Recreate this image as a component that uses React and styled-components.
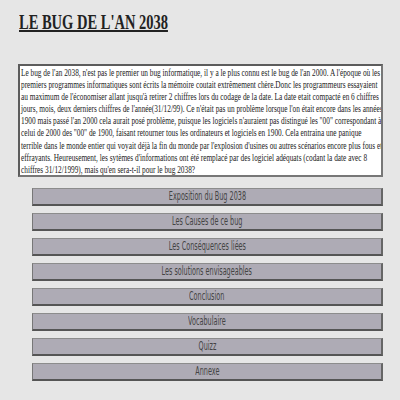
import React from 'react';
import styled, { createGlobalStyle } from 'styled-components';

const GlobalStyle = createGlobalStyle`
    html, body {
        margin: 0;
        padding: 0;
        background: #e6e6e6;
    }
`

const Page = styled.div`
    width: 400px;
    min-height: 400px;
    padding: 10px 17px 0 18px;
    box-sizing: border-box;
    display: flex;
    flex-direction: column;
`

const Title = styled.h1`
    margin: 0 0 0 1px;
    font-family: 'Liberation Serif', serif;
    font-size: 21px;
    font-weight: bold;
    color: #222;
    line-height: 24px;
    height: 24px;
    white-space: nowrap;
    text-decoration: underline;
    text-decoration-thickness: 2px;
    transform: scaleX(0.69);
    transform-origin: left top;
`

const TextBox = styled.div`
    margin-top: 30px;
    background: #fff;
    border: 2px solid #5c5c5c;
    border-right-color: #777;
    border-bottom-color: #777;
    padding: 0 0 0 1px;
    overflow: hidden;
`

const Text = styled.p`
    margin: 0;
    width: ${props => props.$w}px;
    font-family: 'Liberation Serif', serif;
    font-size: 11px;
    line-height: 12.1px;
    color: #222;
    transform: scaleX(${props => props.$s});
    transform-origin: left top;
`

const Menu = styled.nav`
    margin: 11px 0 0 14px;
    display: flex;
    flex-direction: column;
    gap: 7px;
`

const Button = styled.div`
    height: 18px;
    box-sizing: border-box;
    background: #aeabb5;
    border-top: 1px solid #8c8c8c;
    border-left: 1px solid #777;
    border-right: 2px solid #666;
    border-bottom: 2px solid #555;
    display: flex;
    align-items: center;
    justify-content: center;
    overflow: hidden;
`

const Label = styled.span`
    font-family: 'DejaVu Sans', sans-serif;
    font-size: 12px;
    color: #444;
    white-space: nowrap;
    transform: scaleX(0.54);
`

const links = [
    'Exposition du Bug 2038',
    'Les Causes de ce bug',
    'Les Conséquences liées',
    'Les solutions envisageables',
    'Conclusion',
    'Vocabulaire',
    'Quizz',
    'Annexe',
]

const SCALE = 0.665

const App = () => {
    return (
        <Page>
            <GlobalStyle />
            <Title>LE BUG DE L'AN 2038</Title>
            <TextBox>
                <Text $s={SCALE} $w={Math.round(363 / SCALE)}>
                    Le bug de l'an 2038, n'est pas le premier un bug informatique, il y a le plus connu est le bug de l'an 2000. A l'époque où les premiers programmes informatiques sont écrits la mémoire coutait extrêmement chère.Donc les programmeurs essayaient au maximum de l'économiser allant jusqu'à retirer 2 chiffres lors du codage de la date. La date etait compacté en 6 chiffres jours, mois, deux derniers chiffres de l'année(31/12/99). Ce n'était pas un problème lorsque l'on était encore dans les années 1900 mais passé l'an 2000 cela aurait posé problème, puisque les logiciels n'auraient pas distingué les "00" correspondant à celui de 2000 des "00" de 1900, faisant retourner tous les ordinateurs et logiciels en 1900. Cela entraina une panique terrible dans le monde entier qui voyait déjà la fin du monde par l'explosion d'usines ou autres scénarios encore plus fous et effrayants. Heureusement, les sytèmes d'informations ont été remplacé par des logiciel adéquats (codant la date avec 8 chiffres 31/12/1999), mais qu'en sera-t-il pour le bug 2038?
                </Text>
            </TextBox>
            <Menu>
                {links.map(l =>
                    <Button key={l}><Label>{l}</Label></Button>
                )}
            </Menu>
        </Page>
    )
}

export default App
